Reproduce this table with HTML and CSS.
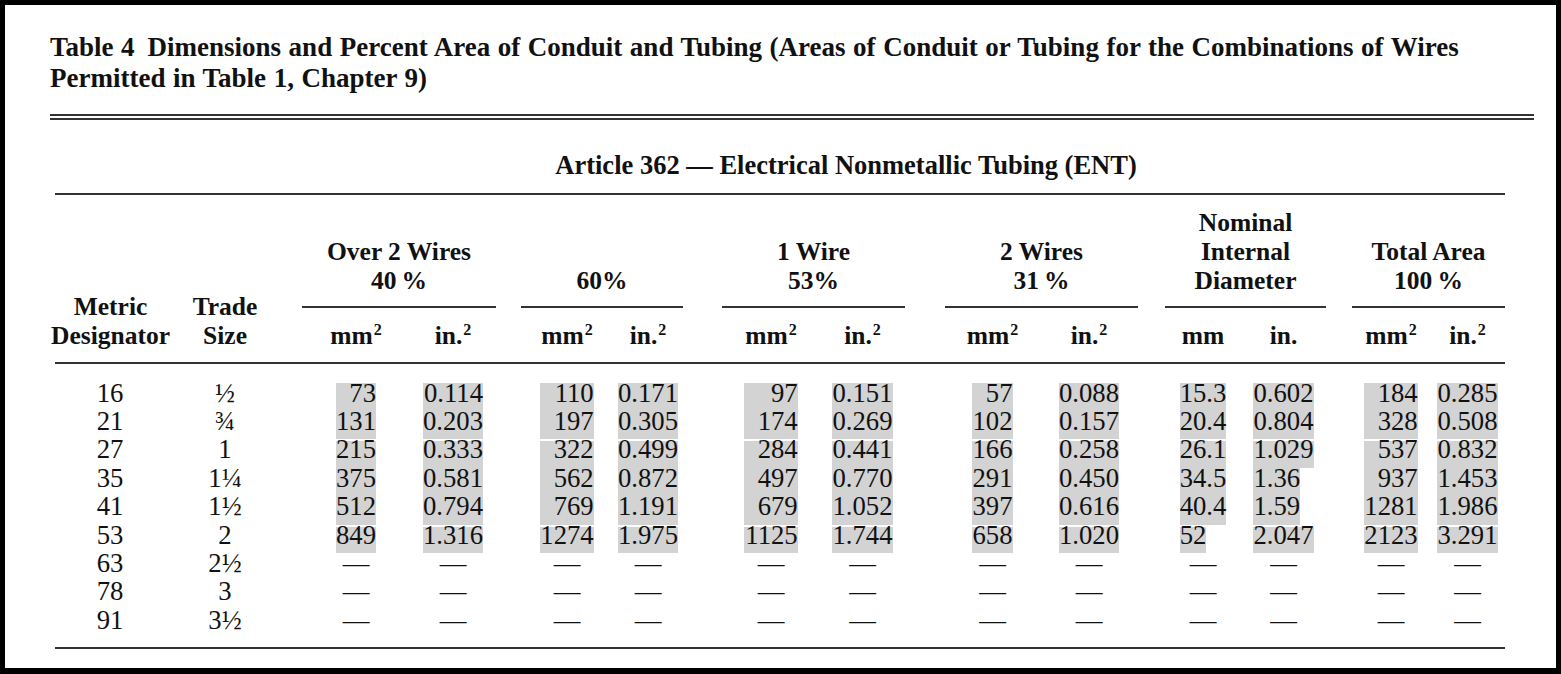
FILE: index.html
```html
<!DOCTYPE html>
<html lang="en">
<head>
<meta charset="utf-8">
<title>Table 4 Dimensions and Percent Area of Conduit and Tubing</title>
<link rel="stylesheet" href="styles.css">
</head>
<body>
<div class="page">
  <h1 class="title">Table 4&thinsp; Dimensions and Percent Area of Conduit and Tubing (Areas of Conduit or Tubing for the Combinations of Wires Permitted in Table 1, Chapter 9)</h1>
  <div class="rule"></div>
  <table class="ent">
    <colgroup>
      <col class="c-met"><col class="c-trd"><col class="c-s17">
      <col class="c-108"><col class="c-86"><col class="c-s25">
      <col class="c-92"><col class="c-70"><col class="c-s39">
      <col class="c-98"><col class="c-85"><col class="c-s40">
      <col class="c-95"><col class="c-98"><col class="c-s27">
      <col class="c-76"><col class="c-85"><col class="c-s26">
      <col class="c-78"><col class="c-75">
    </colgroup>
    <thead>
      <tr>
        <th class="caption" colspan="20">Article 362 — Electrical Nonmetallic Tubing (ENT)</th>
      </tr>
      <tr class="grp-row">
        <th class="side" rowspan="2"><span class="over">Metric<br>Designator</span></th>
        <th class="side" rowspan="2">Trade<br>Size</th>
        <th class="side" rowspan="2"></th>
        <th class="grp" colspan="2">Over 2 Wires<br>40&thinsp;%</th>
        <th class="side" rowspan="2"></th>
        <th class="grp" colspan="2">60%</th>
        <th class="side" rowspan="2"></th>
        <th class="grp" colspan="2">1 Wire<br>53%</th>
        <th class="side" rowspan="2"></th>
        <th class="grp" colspan="2">2 Wires<br>31&thinsp;%</th>
        <th class="side" rowspan="2"></th>
        <th class="grp" colspan="2">Nominal<br>Internal<br>Diameter</th>
        <th class="side" rowspan="2"></th>
        <th class="grp" colspan="2">Total Area<br>100&thinsp;%</th>
      </tr>
      <tr class="unit-row">
        <th>mm<sup>2</sup></th><th>in.<sup>2</sup></th>
        <th>mm<sup>2</sup></th><th>in.<sup>2</sup></th>
        <th>mm<sup>2</sup></th><th>in.<sup>2</sup></th>
        <th>mm<sup>2</sup></th><th>in.<sup>2</sup></th>
        <th>mm</th><th>in.</th>
        <th>mm<sup>2</sup></th><th>in.<sup>2</sup></th>
      </tr>
    </thead>
    <tbody>
      <tr>
        <td>16</td><td>½</td><td></td>
        <td><span class="hl w3">73</span></td><td><span class="hl wd">0.114</span></td><td></td>
        <td><span class="hl w4">110</span></td><td><span class="hl wd">0.171</span></td><td></td>
        <td><span class="hl w4">97</span></td><td><span class="hl wd">0.151</span></td><td></td>
        <td><span class="hl w3">57</span></td><td><span class="hl wd">0.088</span></td><td></td>
        <td><span class="slot s-mm"><span class="hl">15.3</span></span></td><td><span class="slot s-in"><span class="hl">0.602</span></span></td><td></td>
        <td><span class="hl w4">184</span></td><td><span class="hl wd">0.285</span></td>
      </tr>
      <tr>
        <td>21</td><td>¾</td><td></td>
        <td><span class="hl w3">131</span></td><td><span class="hl wd">0.203</span></td><td></td>
        <td><span class="hl w4">197</span></td><td><span class="hl wd">0.305</span></td><td></td>
        <td><span class="hl w4">174</span></td><td><span class="hl wd">0.269</span></td><td></td>
        <td><span class="hl w3">102</span></td><td><span class="hl wd">0.157</span></td><td></td>
        <td><span class="slot s-mm"><span class="hl">20.4</span></span></td><td><span class="slot s-in"><span class="hl">0.804</span></span></td><td></td>
        <td><span class="hl w4">328</span></td><td><span class="hl wd">0.508</span></td>
      </tr>
      <tr class="gap">
        <td>27</td><td>1</td><td></td>
        <td><span class="hl w3">215</span></td><td><span class="hl wd">0.333</span></td><td></td>
        <td><span class="hl w4">322</span></td><td><span class="hl wd">0.499</span></td><td></td>
        <td><span class="hl w4">284</span></td><td><span class="hl wd">0.441</span></td><td></td>
        <td><span class="hl w3">166</span></td><td><span class="hl wd">0.258</span></td><td></td>
        <td><span class="slot s-mm"><span class="hl">26.1</span></span></td><td><span class="slot s-in"><span class="hl">1.029</span></span></td><td></td>
        <td><span class="hl w4">537</span></td><td><span class="hl wd">0.832</span></td>
      </tr>
      <tr>
        <td>35</td><td>1¼</td><td></td>
        <td><span class="hl w3">375</span></td><td><span class="hl wd">0.581</span></td><td></td>
        <td><span class="hl w4">562</span></td><td><span class="hl wd">0.872</span></td><td></td>
        <td><span class="hl w4">497</span></td><td><span class="hl wd">0.770</span></td><td></td>
        <td><span class="hl w3">291</span></td><td><span class="hl wd">0.450</span></td><td></td>
        <td><span class="slot s-mm"><span class="hl">34.5</span></span></td><td><span class="slot s-in"><span class="hl">1.36</span></span></td><td></td>
        <td><span class="hl w4">937</span></td><td><span class="hl wd">1.453</span></td>
      </tr>
      <tr>
        <td>41</td><td>1½</td><td></td>
        <td><span class="hl w3">512</span></td><td><span class="hl wd">0.794</span></td><td></td>
        <td><span class="hl w4">769</span></td><td><span class="hl wd">1.191</span></td><td></td>
        <td><span class="hl w4">679</span></td><td><span class="hl wd">1.052</span></td><td></td>
        <td><span class="hl w3">397</span></td><td><span class="hl wd">0.616</span></td><td></td>
        <td><span class="slot s-mm"><span class="hl">40.4</span></span></td><td><span class="slot s-in"><span class="hl">1.59</span></span></td><td></td>
        <td><span class="hl w4">1281</span></td><td><span class="hl wd">1.986</span></td>
      </tr>
      <tr class="gap">
        <td>53</td><td>2</td><td></td>
        <td><span class="hl w3">849</span></td><td><span class="hl wd">1.316</span></td><td></td>
        <td><span class="hl w4">1274</span></td><td><span class="hl wd">1.975</span></td><td></td>
        <td><span class="hl w4">1125</span></td><td><span class="hl wd">1.744</span></td><td></td>
        <td><span class="hl w3">658</span></td><td><span class="hl wd">1.020</span></td><td></td>
        <td><span class="slot s-mm"><span class="hl">52</span></span></td><td><span class="slot s-in"><span class="hl">2.047</span></span></td><td></td>
        <td><span class="hl w4">2123</span></td><td><span class="hl wd">3.291</span></td>
      </tr>
      <tr>
        <td>63</td><td>2½</td><td></td>
        <td>—</td><td>—</td><td></td>
        <td>—</td><td>—</td><td></td>
        <td>—</td><td>—</td><td></td>
        <td>—</td><td>—</td><td></td>
        <td>—</td><td>—</td><td></td>
        <td>—</td><td>—</td>
      </tr>
      <tr>
        <td>78</td><td>3</td><td></td>
        <td>—</td><td>—</td><td></td>
        <td>—</td><td>—</td><td></td>
        <td>—</td><td>—</td><td></td>
        <td>—</td><td>—</td><td></td>
        <td>—</td><td>—</td><td></td>
        <td>—</td><td>—</td>
      </tr>
      <tr>
        <td>91</td><td>3½</td><td></td>
        <td>—</td><td>—</td><td></td>
        <td>—</td><td>—</td><td></td>
        <td>—</td><td>—</td><td></td>
        <td>—</td><td>—</td><td></td>
        <td>—</td><td>—</td><td></td>
        <td>—</td><td>—</td>
      </tr>
    </tbody>
  </table>
</div>
</body>
</html>
```

FILE: styles.css
```css
html, body {
  margin: 0;
  padding: 0;
  background: #000;
}

body {
  font-family: "Liberation Serif", "Times New Roman", serif;
  color: #111;
}

.page {
  box-sizing: border-box;
  margin: 5px 5px 6px;
  height: 663px;
  background: #fff;
  padding: 27px 22px 0 45px;
  overflow: hidden;
}

.title {
  margin: 0;
  font-size: 27px;
  font-weight: bold;
  line-height: 31px;
  word-spacing: 0.8px;
}

.rule {
  margin-top: 20px;
  border-top: 6px double #333;
}

.ent {
  margin: 29.6px 0 0 5px;
  width: 1450px;
  table-layout: fixed;
  border-collapse: separate;
  border-spacing: 0;
}

.c-met { width: 110px; }
.c-trd { width: 120px; }
.c-s17 { width: 17px; }
.c-108 { width: 108px; }
.c-86 { width: 86px; }
.c-s25 { width: 25px; }
.c-92 { width: 92px; }
.c-70 { width: 70px; }
.c-s39 { width: 39px; }
.c-98 { width: 98px; }
.c-85 { width: 85px; }
.c-s40 { width: 40px; }
.c-95 { width: 95px; }
.c-s27 { width: 27px; }
.c-76 { width: 76px; }
.c-s26 { width: 26px; }
.c-78 { width: 78px; }
.c-75 { width: 75px; }

.ent th {
  font-weight: bold;
  font-size: 25.5px;
  line-height: 29px;
  text-align: center;
  padding: 0;
  white-space: nowrap;
}

.ent th.caption {
  font-size: 26.5px;
  line-height: 31px;
  padding: 0 0 12px 132px;
  border-bottom: 2px solid #333;
}

.over {
  display: block;
  margin: 0 -6px 0 -5px;
}

.grp-row th {
  vertical-align: bottom;
}

.grp-row th.grp {
  padding: 13.7px 0 10.3px;
  border-bottom: 2px solid #333;
}

.grp-row th.side {
  padding: 0 0 11.3px;
  border-bottom: 2px solid #333;
}

.unit-row th {
  padding: 13.7px 0 11.3px;
  border-bottom: 2px solid #333;
}

sup {
  font-size: 63%;
  line-height: 0;
  vertical-align: 0.6em;
  margin-left: 1px;
}

.ent td {
  font-size: 26.7px;
  line-height: 21.2px;
  height: 28.4px;
  vertical-align: top;
  text-align: center;
  padding: 0;
  white-space: nowrap;
}

.ent tbody tr:first-child td {
  padding-top: 19px;
}

.ent tbody tr:last-child td {
  padding-bottom: 9.4px;
  border-bottom: 2px solid #333;
}

.hl {
  display: inline-block;
  vertical-align: top;
  padding-bottom: 7.2px;
  background: #d3d3d3;
  text-align: right;
}

.w3 { width: 1.5em; }
.w4 { width: 2em; }
.wd { width: 2.25em; }

.slot {
  display: inline-block;
  vertical-align: top;
  text-align: left;
}

.s-mm { width: 1.75em; }
.s-in { width: 2.25em; }

.gap .hl {
  box-shadow: inset 0 2px 0 #fff;
}
```
